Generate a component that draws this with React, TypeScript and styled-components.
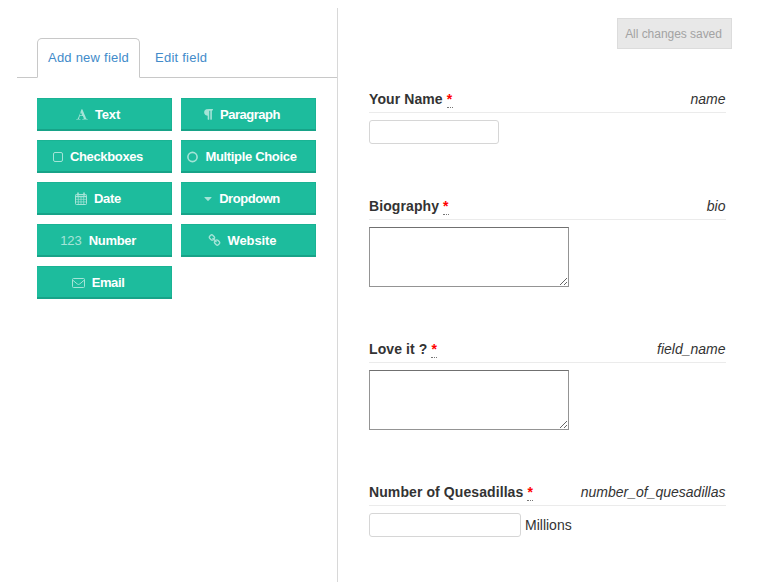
import React from 'react';
import styled, { createGlobalStyle } from 'styled-components';

const GlobalStyle = createGlobalStyle`
  *, *::before, *::after { box-sizing: border-box; }
  html, body { margin: 0; background: #fff; overflow: hidden; }
  body { font: 14px/20px "Liberation Sans", Arial, sans-serif; color: #333; }
`;

const Page = styled.main`
  display: flex;
  height: 582px;
  padding: 8px 0 0 17px;
`;

const Sidebar = styled.aside`
  width: 321px;
  flex: none;
  border-right: 1px solid #d8d8d8;
  padding-top: 30px;
`;

const Tabs = styled.nav`
  display: flex;
  height: 40px;
  padding-left: 20px;
  border-bottom: 1px solid #c8c8c8;
`;

const Tab = styled.a<{ $active?: boolean }>`
  height: 40px;
  padding: 9px 10px;
  margin-right: 4px;
  border: 1px solid ${p => (p.$active ? '#c8c8c8' : 'transparent')};
  border-bottom-color: ${p => (p.$active ? '#fff' : 'transparent')};
  border-radius: 5px 5px 0 0;
  color: #428bca;
  font-size: 13px;
  letter-spacing: 0.23px;
  white-space: nowrap;
`;

const FieldTypes = styled.div`
  display: grid;
  grid-template-columns: 135px 135px;
  grid-auto-rows: 33px;
  gap: 9px;
  padding: 20px 0 0 20px;
`;

const TypeButton = styled.button<{ $track: string }>`
  display: flex;
  align-items: center;
  justify-content: center;
  gap: 7px;
  padding: 0 13px 0 0;
  border: 0;
  background: #1dbc9d;
  box-shadow: inset 0 -2px 0 #17a388, inset 0 1px 0 #1ab394, inset -1px 0 0 #1ab394;
  color: #fff;
  font: bold 13px/20px "Liberation Sans", Arial, sans-serif;
  letter-spacing: ${p => p.$track};
  white-space: nowrap;
`;

const Glyph = styled.svg`
  flex: none;
  fill: currentColor;
  opacity: 0.6;
`;

const Digits = styled.span`
  font-weight: normal;
  letter-spacing: 0;
  opacity: 0.6;
`;

const Preview = styled.section`
  position: relative;
  flex: 1;
  padding: 81px 45px 0 31px;
`;

const SavedBadge = styled.button`
  position: absolute;
  top: 10px;
  right: 39px;
  width: 115px;
  height: 31px;
  padding: 0 2px 0 0;
  border: 1px solid #dcdcdc;
  background: #e8e8e8;
  color: #a3a3a3;
  font: 12px/20px "Liberation Sans", Arial, sans-serif;
  letter-spacing: -0.04px;
`;

const Field = styled.div<{ $height: number }>`
  height: ${p => p.$height}px;
`;

const Heading = styled.div`
  display: flex;
  justify-content: space-between;
  height: 24px;
  border-bottom: 1px solid #ebebeb;
  margin-bottom: 7px;
  white-space: nowrap;
`;

const Label = styled.label`
  font-weight: bold;
  letter-spacing: 0.09px;
`;

const Required = styled.abbr`
  display: inline-block;
  width: 6px;
  height: 19px;
  margin-left: 4px;
  border-bottom: 1px dotted #777;
  color: #f00;
  text-decoration: none;
  letter-spacing: 0;
  line-height: 20px;
  vertical-align: top;
`;

const FieldKey = styled.em`
  padding-right: 0.5px;
`;

const InputRow = styled.div`
  display: flex;
  align-items: center;
  gap: 4px;
`;

const TextInput = styled.input<{ $width: number }>`
  width: ${p => p.$width}px;
  height: 24px;
  border: 1px solid #d6d6d6;
  border-radius: 3px;
  background: #fff;
`;

const TextArea = styled.textarea`
  display: block;
  width: 200px;
  height: 60px;
  border: 1px solid #949494;
  border-top-color: #707070;
  border-radius: 0;
  background: #fff;
  resize: both;
`;

const FontIcon = () => (
  <Glyph width="12" height="13" viewBox="0 64 1792 1664">
    <path d="M725 559l-170 450q33 0 136.5 2t160.5 2q19 0 57-2-87-253-184-452zM64 1664l2-79q23-7 56-12.5t57-10.5 49.5-14.5 44.5-29 31-50.5l237-616 280-724h128q8 14 11 21l205 480q33 78 106 257.5t114 274.5q15 34 58 144.5t72 168.5q20 45 35 57 19 15 88 29.5t84 20.5q6 38 6 57 0 5-.5 13.5t-.5 12.5q-63 0-190-8t-191-8q-76 0-215 7t-178 8q0-43 4-78l131-28q1 0 12.5-2.5t15.5-3.5 14.5-4.5 15-6.5 11-8 9-11 2.5-14q0-16-31-96.5t-72-177.5-42-100l-450-2q-26 58-76.5 195.5t-50.5 162.5q0 22 14 37.5t43.5 24.5 48.5 13.5 57 8.5 41 4q1 19 1 58 0 9-2 27-58 0-174.5-10t-174.5-10q-8 0-26.5 4t-21.5 4q-80 14-188 14z" />
  </Glyph>
);

const ParagraphIcon = () => (
  <Glyph width="9" height="13" viewBox="256 64 1290 1728">
    <path d="M1534 189v73q0 29-18.500 61t-42.500 32q-50 0-54 1-26 6-32 31-3 11-3 64v1152q0 25-18 43t-43 18h-108q-25 0-43-18t-18-43v-1218h-143v1218q0 25-17.500 43t-43.500 18h-108q-26 0-43.500-18t-17.500-43v-496q-147-12-245-59-126-58-192-179-64-117-64-259 0-166 88-286 88-118 209-159 111-37 417-37h479q25 0 43 18t18 43z" />
  </Glyph>
);

const SquareIcon = () => (
  <Glyph width="10" height="12" viewBox="0 0 10 12">
    <rect x=".5" y="1.500" width="9" height="9" rx="1.500" fill="none" stroke="currentColor" />
  </Glyph>
);

const CircleIcon = () => (
  <Glyph width="11" height="12" viewBox="0 0 11 12">
    <circle cx="5.500" cy="6" r="4.600" fill="none" stroke="currentColor" strokeWidth="1.600" />
  </Glyph>
);

const CalendarIcon = () => (
  <Glyph width="12" height="13" viewBox="0 0 12 13">
    <g fill="none" stroke="currentColor">
      <rect x=".5" y="2.500" width="11" height="10" rx=".8" />
      <path d="M.5 4.500h11M3 .5v3M9 .5v3" strokeWidth="1.600" />
      <path d="M1 7.300h10M1 9.900h10M3.300 5v7.500M6 5v7.500M8.700 5v7.500" strokeWidth=".7" />
    </g>
  </Glyph>
);

const CaretIcon = () => (
  <Glyph width="8" height="12" viewBox="0 0 8 12">
    <path d="M.9 4h6.200q.8 0 .3.700L4.400 7.800q-.4.400-.8 0L.6 4.700Q.1 4 .9 4z" />
  </Glyph>
);

const LinkIcon = () => (
  <Glyph width="13" height="13" viewBox="0 0 1792 1792">
    <path d="M1520 1216q0-40-28-68l-208-208q-28-28-68-28-42 0-72 32 3 3 19 18.500t21.500 21.500 15 19 13 25.500 3.500 27.500q0 40-28 68t-68 28q-15 0-27.500-3.500t-25.500-13-19-15-21.500-21.500-18.500-19q-33 31-33 73 0 40 28 68l206 207q27 27 68 27 40 0 68-26l147-146q28-28 28-67zm-703-705q0-40-28-68l-206-207q-28-28-68-28-39 0-68 27l-147 146q-28 28-28 67 0 40 28 68l208 208q27 27 68 27 42 0 72-31-3-3-19-18.500t-21.500-21.500-15-19-13-25.500-3.500-27.500q0-40 28-68t68-28q15 0 27.500 3.500t25.500 13 19 15 21.500 21.500 18.500 19q33-31 33-73zm895 705q0 120-85 203l-147 146q-83 83-203 83-121 0-204-85l-206-207q-83-83-83-203 0-123 88-209l-88-88q-86 88-208 88-120 0-204-84l-208-208q-84-84-84-204t85-203l147-146q83-83 203-83 121 0 204 85l206 207q83 83 83 203 0 123-88 209l88 88q86-88 208-88 120 0 204 84l208 208q84 84 84 204z" />
  </Glyph>
);

const EnvelopeIcon = () => (
  <Glyph width="13" height="12" viewBox="0 0 13 12">
    <g fill="none" stroke="currentColor">
      <rect x=".5" y="1.500" width="12" height="9" rx="1" />
      <path d="M.8 3.200L5.300 7q1.200.9 2.400 0l4.500-3.800" />
    </g>
  </Glyph>
);

const fieldTypes = [
  { name: 'Text', icon: <FontIcon />, track: '-0.15px' },
  { name: 'Paragraph', icon: <ParagraphIcon />, track: '-0.5px' },
  { name: 'Checkboxes', icon: <SquareIcon />, track: '-0.36px' },
  { name: 'Multiple Choice', icon: <CircleIcon />, track: '-0.33px' },
  { name: 'Date', icon: <CalendarIcon />, track: '-0.25px' },
  { name: 'Dropdown', icon: <CaretIcon />, track: '-0.45px' },
  { name: 'Number', icon: <Digits>123</Digits>, track: '-0.35px' },
  { name: 'Website', icon: <LinkIcon />, track: '-0.1px' },
  { name: 'Email', icon: <EnvelopeIcon />, track: '-0.4px' },
];

const fields = [
  { label: 'Your Name', name: 'name', height: 107, width: 130 },
  { label: 'Biography', name: 'bio', height: 143, area: true },
  { label: 'Love it ?', name: 'field_name', height: 143, area: true },
  { label: 'Number of Quesadillas', name: 'number_of_quesadillas', height: 90, width: 152, unit: 'Millions' },
];

export default function App() {
  return (
    <>
      <GlobalStyle />
      <Page>
        <Sidebar>
          <Tabs>
            <Tab $active>Add new field</Tab>
            <Tab>Edit field</Tab>
          </Tabs>
          <FieldTypes>
            {fieldTypes.map(type => (
              <TypeButton key={type.name} $track={type.track}>
                {type.icon}
                <span>{type.name}</span>
              </TypeButton>
            ))}
          </FieldTypes>
        </Sidebar>
        <Preview>
          <SavedBadge>All changes saved</SavedBadge>
          {fields.map(field => (
            <Field key={field.name} $height={field.height}>
              <Heading>
                <Label>
                  {field.label}
                  <Required title="required">*</Required>
                </Label>
                <FieldKey>{field.name}</FieldKey>
              </Heading>
              {field.area ? (
                <TextArea />
              ) : (
                <InputRow>
                  <TextInput $width={field.width ?? 130} />
                  {field.unit}
                </InputRow>
              )}
            </Field>
          ))}
        </Preview>
      </Page>
    </>
  );
}
